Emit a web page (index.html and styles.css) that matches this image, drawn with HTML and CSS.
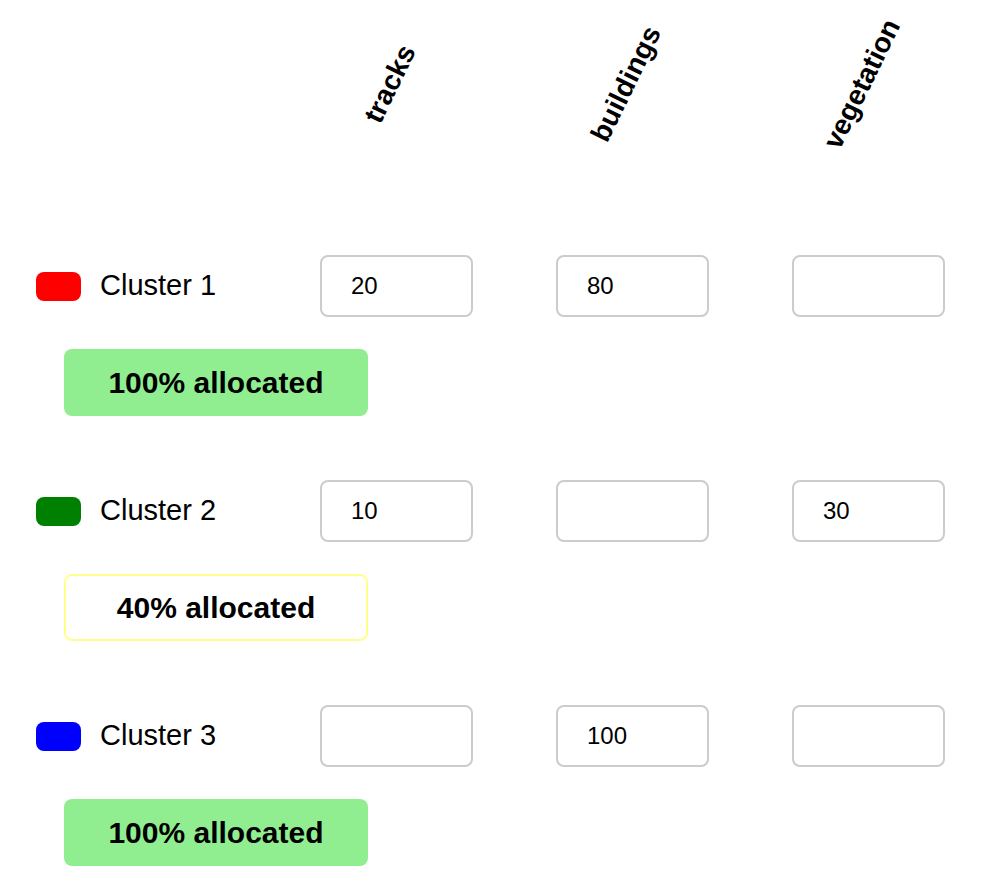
FILE: index.html
```html
<!DOCTYPE html>
<html>
<head>
<meta charset="utf-8">
<link rel="stylesheet" href="styles.css">
</head>
<body>
<div class="page">
  <div class="grid header">
    <div class="corner"></div>
    <div class="head-cell"><span class="head-label">tracks</span></div>
    <div class="head-cell"><span class="head-label">buildings</span></div>
    <div class="head-cell"><span class="head-label">vegetation</span></div>
  </div>

  <div class="cluster">
    <div class="grid row">
      <div class="name"><span class="swatch red"></span><span class="label">Cluster 1</span></div>
      <input class="cell" type="text" value="20">
      <input class="cell" type="text" value="80">
      <input class="cell" type="text" value="">
    </div>
    <div class="status full">100% allocated</div>
  </div>

  <div class="cluster">
    <div class="grid row">
      <div class="name"><span class="swatch green"></span><span class="label">Cluster 2</span></div>
      <input class="cell" type="text" value="10">
      <input class="cell" type="text" value="">
      <input class="cell" type="text" value="30">
    </div>
    <div class="status partial">40% allocated</div>
  </div>

  <div class="cluster">
    <div class="grid row">
      <div class="name"><span class="swatch blue"></span><span class="label">Cluster 3</span></div>
      <input class="cell" type="text" value="">
      <input class="cell" type="text" value="100">
      <input class="cell" type="text" value="">
    </div>
    <div class="status full">100% allocated</div>
  </div>
</div>
</body>
</html>
```

FILE: styles.css
```css
html, body {
  margin: 0;
  padding: 0;
  background: #ffffff;
}

body {
  font-family: "Liberation Sans", Arial, sans-serif;
  color: #000000;
}

.page {
  padding-left: 36px;
}

.grid {
  display: grid;
  grid-template-columns: 201px 153px 153px 153px;
  column-gap: 83px;
}

.header {
  height: 170px;
}

.head-cell {
  display: flex;
  align-items: center;
  justify-content: center;
  position: relative;
  left: -6px;
  top: -1px;
}

.head-label {
  display: inline-block;
  white-space: nowrap;
  font-weight: bold;
  font-size: 28px;
  transform: rotate(-64deg);
}

.cluster {
  margin-top: 85px;
}

.cluster + .cluster {
  margin-top: 64px;
}

.row {
  height: 62px;
  align-items: center;
}

.name {
  display: flex;
  align-items: center;
  gap: 19px;
}

.swatch {
  display: inline-block;
  width: 45px;
  height: 29px;
  border-radius: 8px;
}

.red { background: #ff0000; }
.green { background: #008000; }
.blue { background: #0000ff; }

.label {
  font-size: 29px;
  position: relative;
  top: -1px;
}

.cell {
  box-sizing: border-box;
  width: 153px;
  height: 62px;
  border: 2px solid #cccccc;
  border-radius: 8px;
  padding: 0 0 0 29px;
  font-family: "Liberation Sans", Arial, sans-serif;
  font-size: 24px;
  color: #000000;
  background: #ffffff;
  outline: none;
}

.status {
  box-sizing: border-box;
  margin-top: 32px;
  margin-left: 28px;
  width: 304px;
  height: 67px;
  border-radius: 8px;
  display: flex;
  align-items: center;
  justify-content: center;
  font-weight: bold;
  font-size: 30px;
}

.full {
  background: #90ee90;
}

.partial {
  background: #ffffff;
  border: 2px solid #ffff8c;
}
```
